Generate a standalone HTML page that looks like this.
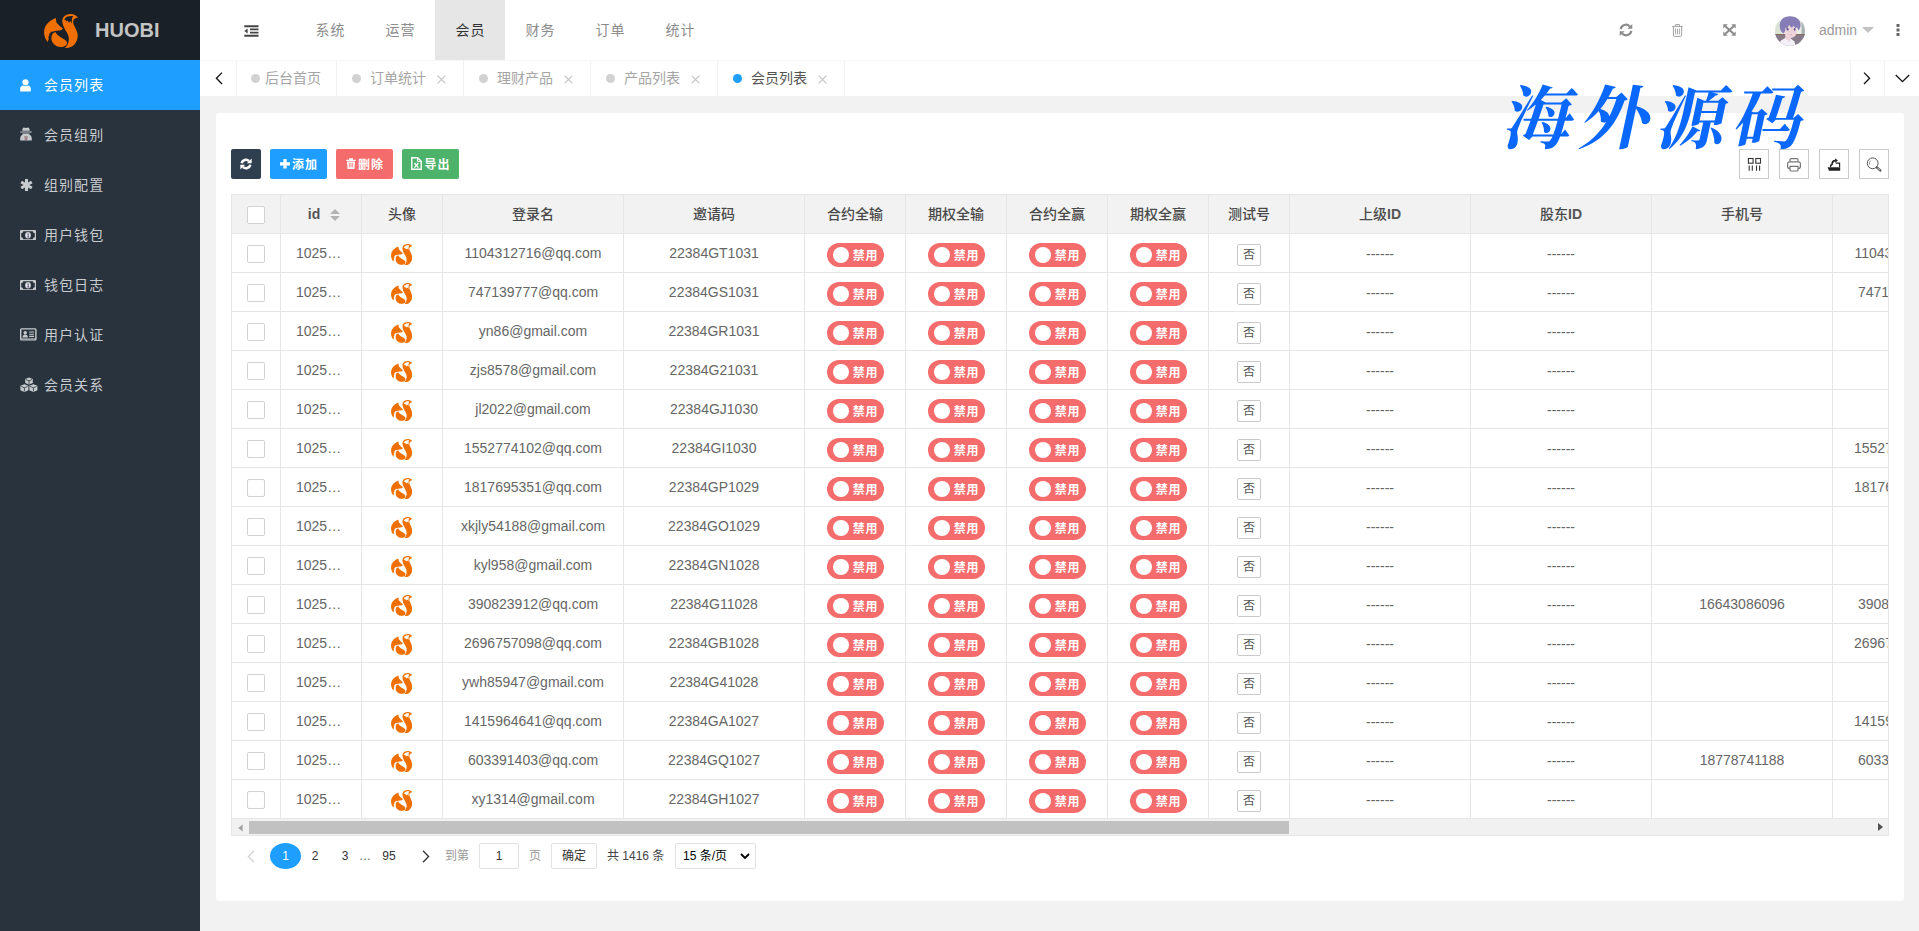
<!DOCTYPE html><html lang="zh-CN"><head><meta charset="utf-8"><title>HUOBI</title><style>
*{box-sizing:border-box;margin:0;padding:0}
html,body{width:1919px;height:931px;overflow:hidden;background:#f2f2f2;font-family:"Liberation Sans","Noto Sans CJK SC",sans-serif;font-size:14px;color:#666}
.abs{position:absolute}
#side{position:absolute;left:0;top:0;width:200px;height:931px;background:#28333e}
#logo{position:absolute;left:0;top:0;width:200px;height:60px;background:#192027}
#logo .t{position:absolute;left:95px;top:18.4px;font-size:20px;line-height:24px;font-weight:bold;color:#c4c4c4;letter-spacing:0}
#logo svg{position:absolute;left:44px;top:14px}
.mi{position:absolute;left:0;width:200px;height:50px;line-height:50px;color:#c8cbce;font-size:14px;padding-left:44px;letter-spacing:1.05px}
.mi.on{background:#1e9fff;color:#fff}
.mi svg{position:absolute}
#head{position:absolute;left:200px;top:0;width:1719px;height:60px;background:#fff}
.nav{position:absolute;top:0;height:60px;width:70px;line-height:60px;text-align:center;color:#8c8c8c;font-size:14px;letter-spacing:1px;padding-left:1px}
.nav.on{background:#e6e6e6;color:#333}
#tabs{position:absolute;left:200px;top:60px;width:1719px;height:36px;background:#fff;border-top:1px solid #f6f6f6}
.tab{position:absolute;top:0;height:35px;line-height:35px;border-right:1px solid #f2f2f2;color:#a5a5a5;font-size:14px;white-space:nowrap}
.tab .dot{position:absolute;top:13px;width:9px;height:9px;border-radius:50%;background:#d2d2d2}
.tab.on{color:#555}
.tab.on .dot{background:#1e9fff}
.tab .x{position:absolute;top:0;font-size:16px;color:#c2c2c2;font-family:"Liberation Sans",sans-serif}
#card{position:absolute;left:216px;top:113px;width:1688px;height:788px;background:#fff;border-radius:3px}
.btn{position:absolute;top:149px;height:30px;line-height:32px;border-radius:2px;color:#fff;font-size:12px;text-align:center;white-space:nowrap}
.tool{position:absolute;top:149px;width:30px;height:30px;border:1px solid #ccc;background:#fff}
#tbl{position:absolute;left:231px;top:194px;width:1658px;height:625px;overflow:hidden;border:1px solid #e6e6e6;border-bottom:none;background:#fff}
#tbl .hd{position:absolute;left:0;top:0;width:1700px;height:39px;background:#f2f2f2;border-bottom:1px solid #e6e6e6}
.c{position:absolute;top:0;height:100%;border-right:1px solid #e6e6e6;text-align:center;white-space:nowrap;overflow:hidden}
.hd .c{line-height:38.6px;font-weight:500;color:#4a4a4a;font-size:14px}
.hd .c b{font-weight:bold;color:#555}
.r{position:absolute;left:0;width:1700px;height:39px;border-bottom:1px solid #e6e6e6;line-height:38px;color:#666;font-size:14px}
.cb{position:absolute;left:15px;top:11px;width:18px;height:18px;border:1px solid #d2d2d2;border-radius:2px;background:#fff}
.sw{position:absolute;top:9px;width:57px;height:24px;border-radius:12px;background:#f56c6c;color:#fff;font-size:12px;line-height:27.5px;text-align:left;padding-left:25.8px;font-weight:bold;letter-spacing:.6px;overflow:hidden}
.sw i{position:absolute;left:6px;top:4px;width:16px;height:16px;border-radius:50%;background:#fff}
.no{position:absolute;left:28px;top:10px;width:24px;height:22px;border:1px solid #c9c9c9;border-radius:2px;font-size:12px;line-height:21.4px;color:#555;background:#fff}
.ds{position:relative;top:1px}
.fox{position:absolute;left:28.7px;top:9.8px}
#sb{position:absolute;left:231px;top:819px;width:1658px;height:17px;background:#f1f1f1;border:1px solid #e6e6e6;border-top:none}
#sb .th{position:absolute;left:17px;top:2.3px;width:1040px;height:12.3px;background:#c1c1c1}
.pg{position:absolute;top:843px;height:26px;line-height:26px;font-size:12px;color:#333;text-align:center;white-space:nowrap}
#wm{position:absolute;left:1506px;top:70px;width:320px;height:100px;font-family:"Liberation Serif","Noto Serif CJK SC",serif;font-weight:700;font-size:69px;line-height:100px;color:#0a68ff;white-space:nowrap;letter-spacing:7.6px;transform:skewX(-12deg);transform-origin:50% 50%}
</style></head><body>
<div id="side"><div id="logo"><svg class="lg" viewBox="0 0 34 34" width="34" height="34"><path fill="#ef7000" fill-rule="evenodd" d="M11.8 3.9 L12.4 8.4 L16 12.2 L18.9 14.6 L17.5 16.1 C15.4 16.8 13 16.6 10.8 17.1 C9.2 17.5 8 18.1 6.9 17.4 L6.2 19.6 L5 19.4 L5.4 21.4 L4.4 22.6 L4.7 25 L3.7 27.9 C1.9 26 0.6 23.2 0.2 20 C-0.2 16.4 0.6 13.4 2.2 11 C4.6 7.6 8 5.2 11.8 3.9 Z"/><path fill="#c85f08" d="M11 11.7 L12.7 12.5 L11.1 12.9 Z"/><path fill="#ef7000" d="M11.4 18 C9.4 18.6 8 20.2 7.5 22.6 C7 25.6 8 28.6 10.2 30.6 C12.4 32.6 15.6 33.4 18.4 33 C20.4 32.7 21.8 32 22.6 30.6 C23.2 29.4 23.1 28.4 22.6 27.6 C21.6 26 19.6 25 17.6 23.8 C15.2 22.4 12.8 20.8 11.4 18 Z"/><path fill="#ef7000" fill-rule="evenodd" d="M34 3.6 C31.8 1.2 29.6 -0.1 26.6 0 C23.4 0.1 20.6 1.2 19.2 3.4 C18.2 5 18 6.8 18.5 9 C19 11.2 20 13.8 21.4 16.2 C22.6 18 23.8 19.8 24.4 22 C25 24.4 25 26.8 24.2 29 C23.6 30.8 22.4 32.6 20.9 34 C23.4 34.2 25.8 33.6 27.9 32.4 C29.6 31.4 30.8 30 31.8 28.4 C32.8 26.8 33.4 25 33.6 23.2 C33.8 21.4 33.6 19.6 33 17.8 C32.4 16 31.4 14 30.4 12 C29.6 10.4 29 8.6 29.2 7.1 C29.5 5.2 31.4 4.2 34 3.6 Z M20.3 6 C21 4.2 22.2 3.1 23.6 2.6 C25 2.1 26.8 1.9 29.1 2.1 C28.3 3.2 28 4.4 27.9 5.6 C27.8 6.8 27.8 8 28 9.6 L26.3 7 L25 8.8 L23.7 6.6 L22.5 7.6 L21.6 5.9 Z"/></svg><div class="t">HUOBI</div></div>
<div class="mi on" style="top:60px"><svg style="left:20px;top:18.8px" width="11" height="13" viewBox="0 0 11 13"><circle cx="5.5" cy="3.3" r="3.1" fill="currentColor"/><path d="M0.2 12.6 V9.6 C0.2 7.6 1.4 6.6 3 6.4 C4.6 7.4 6.4 7.4 8 6.4 C9.6 6.6 10.8 7.6 10.8 9.6 V12.6 Z" fill="currentColor"/></svg>会员列表</div>
<div class="mi" style="top:110px"><svg style="left:20px;top:17px" width="12" height="14" viewBox="0 0 12 14"><path d="M2.2 3.8 C2.4 1.6 3 0.4 4 0.4 C4.8 0.4 5.2 0.9 6 0.9 C6.8 0.9 7.2 0.4 8 0.4 C9 0.4 9.6 1.6 9.8 3.8 Z M0.2 4.5 H11.8 V5.6 H0.2 Z M2.6 6.4 H9.4 V7.2 L10.2 8.2 C11.4 8.8 11.8 10 11.8 13.6 H0.2 C0.2 10 0.6 8.8 1.8 8.2 L2.6 7.2 Z" fill="currentColor"/><path d="M5 9 L5.4 13.2 M7 9 L6.6 13.2" stroke="#7a3a40" stroke-width="0.7"/></svg>会员组别</div>
<div class="mi" style="top:160px"><svg style="left:20px;top:19px" width="13" height="12" viewBox="0 0 13 12"><g stroke="currentColor" stroke-width="3.1" stroke-linecap="butt"><path d="M6.5 0 V12 M1.2 3 L11.8 9 M1.2 9 L11.8 3"/></g></svg>组别配置</div>
<div class="mi" style="top:210px"><svg style="left:19.5px;top:20px" width="16" height="10.4" viewBox="0 0 16 10.4"><rect x="0" y="0" width="16" height="10.4" rx="0.5" fill="currentColor"/><path d="M3.2 1.2 H12.8 A2 2 0 0 0 14.8 3.2 V7.2 A2 2 0 0 0 12.8 9.2 H3.2 A2 2 0 0 0 1.2 7.2 V3.2 A2 2 0 0 0 3.2 1.2 Z" fill="#28333e"/><ellipse cx="8" cy="5.2" rx="2.9" ry="3.2" fill="currentColor"/><ellipse cx="8" cy="5.2" rx="1.9" ry="2.3" fill="#eceff2"/><path d="M7.3 4.2 L8.2 3.6 V6.8 M7.2 6.9 H9.1" stroke="#4a3a6a" stroke-width="0.8" fill="none"/></svg>用户钱包</div>
<div class="mi" style="top:260px"><svg style="left:19.5px;top:20px" width="16" height="10.4" viewBox="0 0 16 10.4"><rect x="0" y="0" width="16" height="10.4" rx="0.5" fill="currentColor"/><path d="M3.2 1.2 H12.8 A2 2 0 0 0 14.8 3.2 V7.2 A2 2 0 0 0 12.8 9.2 H3.2 A2 2 0 0 0 1.2 7.2 V3.2 A2 2 0 0 0 3.2 1.2 Z" fill="#28333e"/><ellipse cx="8" cy="5.2" rx="2.9" ry="3.2" fill="currentColor"/><ellipse cx="8" cy="5.2" rx="1.9" ry="2.3" fill="#eceff2"/><path d="M7.3 4.2 L8.2 3.6 V6.8 M7.2 6.9 H9.1" stroke="#4a3a6a" stroke-width="0.8" fill="none"/></svg>钱包日志</div>
<div class="mi" style="top:310px"><svg style="left:20px;top:18px" width="17" height="13" viewBox="0 0 17 13"><rect x="0.7" y="0.9" width="15.2" height="11" rx="0.8" fill="none" stroke="currentColor" stroke-width="1.4"/><path d="M0.7 10.4 H15.9" stroke="currentColor" stroke-width="0.6"/><circle cx="5.2" cy="4.8" r="1.7" fill="currentColor"/><path d="M2.6 9.6 C2.6 7.4 3.6 6.6 5.2 6.6 C6.8 6.6 7.8 7.4 7.8 9.6 Z" fill="currentColor"/><path d="M9.2 4 H14 M9.2 6.2 H14 M9.2 8.4 H14" stroke="currentColor" stroke-width="1.1"/></svg>用户认证</div>
<div class="mi" style="top:360px"><svg style="left:20px;top:17px" width="18" height="16" viewBox="0 0 18 16"><g fill="currentColor"><path d="M9 0.4 L12.8 1.9 V6 L9 7.6 L5.2 6 V1.9 Z"/><path d="M4.4 7.2 L8.4 8.8 V13.2 L4.4 15 L0.4 13.2 V8.8 Z"/><path d="M13.4 7.2 L17.4 8.8 V13.2 L13.4 15 L9.4 13.2 V8.8 Z"/></g><g fill="none" stroke="#28333e" stroke-width="0.8"><path d="M5.9 2.5 L9 3.8 L12.1 2.5 M9 3.8 V7"/><path d="M1.2 9.4 L4.4 10.8 L7.6 9.4 M4.4 10.8 V14.4"/><path d="M10.2 9.4 L13.4 10.8 L16.6 9.4 M13.4 10.8 V14.4"/></g></svg>会员关系</div>
</div>
<div id="head">
<svg class="abs" style="left:43.6px;top:24.8px" width="15" height="12" viewBox="0 0 15 12"><path d="M0.3 1.2 H14.5 M6 4.4 H14.5 M6 7.6 H14.5 M0.3 10.8 H14.5" stroke="#444" stroke-width="1.9"/><path d="M3.6 3.6 V8.4 L0.4 6 Z" fill="#444"/></svg>
<div class="nav" style="left:95px">系统</div>
<div class="nav" style="left:165px">运营</div>
<div class="nav on" style="left:235px">会员</div>
<div class="nav" style="left:305px">财务</div>
<div class="nav" style="left:375px">订单</div>
<div class="nav" style="left:445px">统计</div>
<svg class="abs" style="left:1419px;top:23px" width="14" height="14" viewBox="0 0 14 14"><g fill="none" stroke="#8a8a8a" stroke-width="2.2"><path d="M1.7 6.2 A5.3 5.3 0 0 1 10.8 3.4"/><path d="M12.3 7.8 A5.3 5.3 0 0 1 3.2 10.6"/></g><path d="M13.3 0.9 V5.8 H8.4 Z M0.7 13.1 V8.2 H5.6 Z" fill="#8a8a8a"/></svg>
<svg class="abs" style="left:1472px;top:24px" width="11" height="13" viewBox="0 0 11 13"><g fill="none" stroke="#a0a0a0" stroke-width="1"><path d="M0.2 2.4 H10.8 M3.6 2.2 V0.6 H7.4 V2.2"/><path d="M1.4 2.6 V11.2 Q1.4 12.4 2.6 12.4 H8.4 Q9.6 12.4 9.6 11.2 V2.6"/><path d="M3.6 4.6 V10.4 M5.5 4.6 V10.4 M7.4 4.6 V10.4" stroke-width="0.9"/></g></svg>
<svg class="abs" style="left:1522.5px;top:24px" width="13" height="12" viewBox="0 0 13 12"><path d="M2.4 2.2 L10.6 9.8 M10.6 2.2 L2.4 9.8" stroke="#8a8a8a" stroke-width="2"/><path d="M0.3 0.3 H4.8 L0.3 4.6 Z M12.7 0.3 V4.6 L8.2 0.3 Z M0.3 11.7 V7.4 L4.8 11.7 Z M12.7 11.7 H8.2 L12.7 7.4 Z" fill="#8a8a8a"/></svg>
<div class="abs" style="left:1575px;top:16px;width:30px;height:30px;border-radius:50%;overflow:hidden"><svg style="display:block" width="30" height="30" viewBox="0 0 30 30"><g><rect width="30" height="30" fill="#e9eee8"/><rect x="0" y="6" width="6" height="12" fill="#d9e4d6"/><rect x="26.5" y="4" width="3.5" height="18" fill="#a9b5b3"/><rect x="0" y="18.2" width="30" height="12" fill="#877b8b"/><rect x="0" y="18.2" width="30" height="0.8" fill="#8a5f4a"/><path d="M2 30 L6 24.5 L11 21.5 L15 22 L19.5 25.5 L20.5 30 Z" fill="#f3f1f6"/><path d="M10.5 18 L15.5 22 L14.8 26 L10 22.5 Z" fill="#ecd3da"/><ellipse cx="15.6" cy="15.4" rx="6.4" ry="6.6" fill="#edd3da"/><path d="M4.8 11 C4 4 9 0.2 15 0.2 C21 0.2 26 3.6 25.6 9.4 C25.4 11.6 24.4 13.2 23.4 14.4 L22 11 L20.6 12.6 L18.4 9.6 L17 12 L14 9 L12 13 L10.6 11.6 L10 15 L8.6 17.6 C6.4 16.4 5.2 14 4.8 11 Z" fill="#867cb6"/><ellipse cx="12.6" cy="13.2" rx="1" ry="1.3" fill="#5b5c93"/><ellipse cx="19.6" cy="13.4" rx="0.9" ry="1.3" fill="#5b5c93"/><ellipse cx="16" cy="18.6" rx="0.6" ry="0.5" fill="#c98a98"/></g></svg></div>
<div class="abs" style="left:1619px;top:0;line-height:60px;font-size:14px;color:#999">admin</div>
<div class="abs" style="left:1662px;top:27px;width:0;height:0;border:6px solid transparent;border-top-color:#c2c2c2;border-bottom:none"></div>
<svg class="abs" style="left:1696px;top:23px" width="4" height="14" viewBox="0 0 4 14"><rect x="0.5" y="1" width="3" height="3" fill="#666"/><rect x="0.5" y="5.5" width="3" height="3" fill="#666"/><rect x="0.5" y="10" width="3" height="3" fill="#666"/></svg>
</div>
<div id="tabs">
<div class="tab" style="left:0;width:37px"><svg class="abs" style="left:15px;top:11px" width="8" height="13" viewBox="0 0 8 13"><path d="M7 0.6 L1.4 6.3 L7 12" fill="none" stroke="#111" stroke-width="1.3"/></svg></div>
<div class="tab" style="left:37px;width:100px"><i class="dot" style="left:14px"></i><span class="abs" style="left:28px">后台首页</span></div>
<div class="tab" style="left:137px;width:127px"><i class="dot" style="left:15px"></i><span class="abs" style="left:33px">订单统计</span><svg class="abs" style="left:100px;top:14px" width="9" height="9" viewBox="0 0 9 9"><path d="M0.6 0.6 L8.4 8.4 M8.4 0.6 L0.6 8.4" stroke="#c2c2c2" stroke-width="1.1"/></svg></div>
<div class="tab" style="left:264px;width:127px"><i class="dot" style="left:15px"></i><span class="abs" style="left:33px">理财产品</span><svg class="abs" style="left:100px;top:14px" width="9" height="9" viewBox="0 0 9 9"><path d="M0.6 0.6 L8.4 8.4 M8.4 0.6 L0.6 8.4" stroke="#c2c2c2" stroke-width="1.1"/></svg></div>
<div class="tab" style="left:391px;width:127px"><i class="dot" style="left:15px"></i><span class="abs" style="left:33px">产品列表</span><svg class="abs" style="left:100px;top:14px" width="9" height="9" viewBox="0 0 9 9"><path d="M0.6 0.6 L8.4 8.4 M8.4 0.6 L0.6 8.4" stroke="#c2c2c2" stroke-width="1.1"/></svg></div>
<div class="tab on" style="left:518px;width:127px"><i class="dot" style="left:15px"></i><span class="abs" style="left:33px">会员列表</span><svg class="abs" style="left:100px;top:14px" width="9" height="9" viewBox="0 0 9 9"><path d="M0.6 0.6 L8.4 8.4 M8.4 0.6 L0.6 8.4" stroke="#c2c2c2" stroke-width="1.1"/></svg></div>
<div class="tab" style="left:1650px;width:35px;border-left:1px solid #f2f2f2"><svg class="abs" style="left:12px;top:11px" width="8" height="13" viewBox="0 0 8 13"><path d="M1 0.6 L6.6 6.3 L1 12" fill="none" stroke="#111" stroke-width="1.3"/></svg></div>
<div class="tab" style="left:1685px;width:34px;border-right:none"><svg class="abs" style="left:10px;top:13px" width="15" height="9" viewBox="0 0 15 9"><path d="M0.8 1 L7.5 7.6 L14.2 1" fill="none" stroke="#111" stroke-width="1.3"/></svg></div>
</div>
<div id="card"></div>
<div class="btn" style="left:231px;width:30px;background:#2f3f50"><svg class="abs" style="left:9px;top:8.5px" width="12" height="12" viewBox="0 0 14 14"><g fill="none" stroke="#fff" stroke-width="3"><path d="M2 6.2 A5.1 5.1 0 0 1 10.6 3.6"/><path d="M12 7.8 A5.1 5.1 0 0 1 3.4 10.4"/></g><path d="M13.6 0.6 V6.2 H8 Z M0.4 13.4 V7.8 H6 Z" fill="#fff"/></svg></div>
<div class="btn" style="left:270px;width:57px;background:#1e9fff;font-weight:bold;padding-left:13px;letter-spacing:1.1px"><svg class="abs" style="left:10px;top:9.6px" width="10" height="10" viewBox="0 0 10 10"><path d="M5 0 V9.6 M0 4.8 H10" stroke="#fff" stroke-width="3.3"/></svg>添加</div>
<div class="btn" style="left:336px;width:57px;background:#f56c6c;font-weight:bold;padding-left:13px;letter-spacing:1.1px"><svg class="abs" style="left:9.5px;top:8.5px" width="10" height="11" viewBox="0 0 10 11"><path d="M0.2 1.7 H9.8 V3.1 H0.2 Z M3 0.2 H7 V1.7 H3 Z M1 3.6 H9 L8.5 10.4 Q8.4 10.9 7.9 10.9 H2.1 Q1.6 10.9 1.5 10.4 Z" fill="#fff"/><path d="M3.3 4.8 V9.4 M5 4.8 V9.4 M6.7 4.8 V9.4" stroke="#f56c6c" stroke-width="0.8"/></svg>删除</div>
<div class="btn" style="left:402px;width:57px;background:#4db36a;font-weight:bold;padding-left:14px;letter-spacing:1.1px"><svg class="abs" style="left:9px;top:8px" width="11" height="13" viewBox="0 0 11 13"><path d="M0.8 0.8 H6.6 L10.2 4.4 V12.2 H0.8 Z" fill="none" stroke="#fff" stroke-width="1.4"/><path d="M6.4 0.8 V4.6 H10.2" fill="none" stroke="#fff" stroke-width="1"/><path d="M3.4 6 L7.4 10.6 M7.4 6 L3.4 10.6" stroke="#fff" stroke-width="1.4"/></svg>导出</div>
<div class="tool" style="left:1739px"><svg class="abs" style="left:-1px;top:-1px" width="30" height="30" viewBox="0 0 30 30"><g fill="none" stroke="#333" stroke-width="1.1"><rect x="9.4" y="9.5" width="4.7" height="4.7"/><rect x="16.8" y="9.5" width="4.7" height="4.7"/><path d="M10.2 16.6 V21.8 M13.3 16.6 V21.8 M17.5 16.6 V21.8 M20.6 16.6 V21.8"/></g></svg></div>
<div class="tool" style="left:1779px"><svg class="abs" style="left:-1px;top:-1px" width="30" height="30" viewBox="0 0 30 30"><g fill="none" stroke="#777" stroke-width="1.2"><path d="M11 12.8 V10.6 Q11 9.6 12 9.6 H18 Q19 9.6 19 10.6 V12.8"/><rect x="8.6" y="12.8" width="12.8" height="6.6" rx="2"/><path d="M11 17.4 H19 V21 Q19 22 18 22 H12 Q11 22 11 21 Z" fill="#fff"/></g></svg></div>
<div class="tool" style="left:1819px"><svg class="abs" style="left:-1px;top:-1px" width="30" height="30" viewBox="0 0 30 30"><path d="M8.6 18.2 H21.2 V21.8 H10 Z" fill="#222"/><path d="M11.6 18 V16.2 H13 M16.8 14.2 H20.6 V18" fill="none" stroke="#222" stroke-width="1.2"/><path d="M13 16 C13 13 14.2 11.6 16.4 11.6" fill="none" stroke="#222" stroke-width="1.7"/><path d="M16.2 9.2 L18.9 11.5 L16.2 13.8 Z" fill="#222"/></svg></div>
<div class="tool" style="left:1859px"><svg class="abs" style="left:-1px;top:-1px" width="30" height="30" viewBox="0 0 30 30"><circle cx="13.7" cy="14.3" r="5.4" fill="none" stroke="#555" stroke-width="1"/><path d="M10.6 15.6 A3.4 3.4 0 0 1 11.6 11.6" fill="none" stroke="#777" stroke-width="0.8"/><path d="M17.8 18.4 L21.4 21.6" stroke="#555" stroke-width="2.2" stroke-linecap="round"/><path d="M18.4 19 L21 21.2" stroke="#fff" stroke-width="0.7"/></svg></div>
<div id="tbl"><div class="hd">
<div class="c" style="left:0px;width:49px"><i class="cb" style="top:11px"></i></div>
<div class="c" style="left:49px;width:81px"><b style="padding-right:14px">id</b><svg class="abs" style="left:49px;top:14px" width="10" height="12" viewBox="0 0 10 12"><path d="M0 5 L5 0 L10 5 Z" fill="#b2b2b2"/><path d="M0 7 L5 12 L10 7 Z" fill="#b2b2b2"/></svg></div>
<div class="c" style="left:130px;width:81px">头像</div>
<div class="c" style="left:211px;width:181px">登录名</div>
<div class="c" style="left:392px;width:181px">邀请码</div>
<div class="c" style="left:573px;width:101px">合约全输</div>
<div class="c" style="left:674px;width:101px">期权全输</div>
<div class="c" style="left:775px;width:101px">合约全赢</div>
<div class="c" style="left:876px;width:101px">期权全赢</div>
<div class="c" style="left:977px;width:81px">测试号</div>
<div class="c" style="left:1058px;width:181px">上级<b>ID</b></div>
<div class="c" style="left:1239px;width:181px">股东<b>ID</b></div>
<div class="c" style="left:1420px;width:181px">手机号</div>
<div class="c" style="left:1601px;width:181px"></div>
</div>
<div class="r" style="top:39px">
<div class="c" style="left:0px;width:49px"><i class="cb"></i></div>
<div class="c" style="left:49px;width:81px;text-align:left;padding-left:15px">1025…</div>
<div class="c" style="left:130px;width:81px"><svg class="fox" viewBox="0 0 34 34" width="21.4" height="21.4"><path fill="#ef7000" fill-rule="evenodd" d="M11.8 3.9 L12.4 8.4 L16 12.2 L18.9 14.6 L17.5 16.1 C15.4 16.8 13 16.6 10.8 17.1 C9.2 17.5 8 18.1 6.9 17.4 L6.2 19.6 L5 19.4 L5.4 21.4 L4.4 22.6 L4.7 25 L3.7 27.9 C1.9 26 0.6 23.2 0.2 20 C-0.2 16.4 0.6 13.4 2.2 11 C4.6 7.6 8 5.2 11.8 3.9 Z"/><path fill="#c85f08" d="M11 11.7 L12.7 12.5 L11.1 12.9 Z"/><path fill="#ef7000" d="M11.4 18 C9.4 18.6 8 20.2 7.5 22.6 C7 25.6 8 28.6 10.2 30.6 C12.4 32.6 15.6 33.4 18.4 33 C20.4 32.7 21.8 32 22.6 30.6 C23.2 29.4 23.1 28.4 22.6 27.6 C21.6 26 19.6 25 17.6 23.8 C15.2 22.4 12.8 20.8 11.4 18 Z"/><path fill="#ef7000" fill-rule="evenodd" d="M34 3.6 C31.8 1.2 29.6 -0.1 26.6 0 C23.4 0.1 20.6 1.2 19.2 3.4 C18.2 5 18 6.8 18.5 9 C19 11.2 20 13.8 21.4 16.2 C22.6 18 23.8 19.8 24.4 22 C25 24.4 25 26.8 24.2 29 C23.6 30.8 22.4 32.6 20.9 34 C23.4 34.2 25.8 33.6 27.9 32.4 C29.6 31.4 30.8 30 31.8 28.4 C32.8 26.8 33.4 25 33.6 23.2 C33.8 21.4 33.6 19.6 33 17.8 C32.4 16 31.4 14 30.4 12 C29.6 10.4 29 8.6 29.2 7.1 C29.5 5.2 31.4 4.2 34 3.6 Z M20.3 6 C21 4.2 22.2 3.1 23.6 2.6 C25 2.1 26.8 1.9 29.1 2.1 C28.3 3.2 28 4.4 27.9 5.6 C27.8 6.8 27.8 8 28 9.6 L26.3 7 L25 8.8 L23.7 6.6 L22.5 7.6 L21.6 5.9 Z"/></svg></div>
<div class="c" style="left:211px;width:181px">1104312716@qq.com</div>
<div class="c" style="left:392px;width:181px">22384GT1031</div>
<div class="c" style="left:573px;width:101px"><span class="sw" style="left:22px"><i></i>禁用</span></div>
<div class="c" style="left:674px;width:101px"><span class="sw" style="left:22px"><i></i>禁用</span></div>
<div class="c" style="left:775px;width:101px"><span class="sw" style="left:22px"><i></i>禁用</span></div>
<div class="c" style="left:876px;width:101px"><span class="sw" style="left:22px"><i></i>禁用</span></div>
<div class="c" style="left:977px;width:81px"><span class="no">否</span></div>
<div class="c" style="left:1058px;width:181px"><span class="ds">------</span></div>
<div class="c" style="left:1239px;width:181px"><span class="ds">------</span></div>
<div class="c" style="left:1420px;width:181px"></div>
<div class="c" style="left:1601px;width:181px">1104312716@qq.com</div>
</div>
<div class="r" style="top:78px">
<div class="c" style="left:0px;width:49px"><i class="cb"></i></div>
<div class="c" style="left:49px;width:81px;text-align:left;padding-left:15px">1025…</div>
<div class="c" style="left:130px;width:81px"><svg class="fox" viewBox="0 0 34 34" width="21.4" height="21.4"><path fill="#ef7000" fill-rule="evenodd" d="M11.8 3.9 L12.4 8.4 L16 12.2 L18.9 14.6 L17.5 16.1 C15.4 16.8 13 16.6 10.8 17.1 C9.2 17.5 8 18.1 6.9 17.4 L6.2 19.6 L5 19.4 L5.4 21.4 L4.4 22.6 L4.7 25 L3.7 27.9 C1.9 26 0.6 23.2 0.2 20 C-0.2 16.4 0.6 13.4 2.2 11 C4.6 7.6 8 5.2 11.8 3.9 Z"/><path fill="#c85f08" d="M11 11.7 L12.7 12.5 L11.1 12.9 Z"/><path fill="#ef7000" d="M11.4 18 C9.4 18.6 8 20.2 7.5 22.6 C7 25.6 8 28.6 10.2 30.6 C12.4 32.6 15.6 33.4 18.4 33 C20.4 32.7 21.8 32 22.6 30.6 C23.2 29.4 23.1 28.4 22.6 27.6 C21.6 26 19.6 25 17.6 23.8 C15.2 22.4 12.8 20.8 11.4 18 Z"/><path fill="#ef7000" fill-rule="evenodd" d="M34 3.6 C31.8 1.2 29.6 -0.1 26.6 0 C23.4 0.1 20.6 1.2 19.2 3.4 C18.2 5 18 6.8 18.5 9 C19 11.2 20 13.8 21.4 16.2 C22.6 18 23.8 19.8 24.4 22 C25 24.4 25 26.8 24.2 29 C23.6 30.8 22.4 32.6 20.9 34 C23.4 34.2 25.8 33.6 27.9 32.4 C29.6 31.4 30.8 30 31.8 28.4 C32.8 26.8 33.4 25 33.6 23.2 C33.8 21.4 33.6 19.6 33 17.8 C32.4 16 31.4 14 30.4 12 C29.6 10.4 29 8.6 29.2 7.1 C29.5 5.2 31.4 4.2 34 3.6 Z M20.3 6 C21 4.2 22.2 3.1 23.6 2.6 C25 2.1 26.8 1.9 29.1 2.1 C28.3 3.2 28 4.4 27.9 5.6 C27.8 6.8 27.8 8 28 9.6 L26.3 7 L25 8.8 L23.7 6.6 L22.5 7.6 L21.6 5.9 Z"/></svg></div>
<div class="c" style="left:211px;width:181px">747139777@qq.com</div>
<div class="c" style="left:392px;width:181px">22384GS1031</div>
<div class="c" style="left:573px;width:101px"><span class="sw" style="left:22px"><i></i>禁用</span></div>
<div class="c" style="left:674px;width:101px"><span class="sw" style="left:22px"><i></i>禁用</span></div>
<div class="c" style="left:775px;width:101px"><span class="sw" style="left:22px"><i></i>禁用</span></div>
<div class="c" style="left:876px;width:101px"><span class="sw" style="left:22px"><i></i>禁用</span></div>
<div class="c" style="left:977px;width:81px"><span class="no">否</span></div>
<div class="c" style="left:1058px;width:181px"><span class="ds">------</span></div>
<div class="c" style="left:1239px;width:181px"><span class="ds">------</span></div>
<div class="c" style="left:1420px;width:181px"></div>
<div class="c" style="left:1601px;width:181px">747139777@qq.com</div>
</div>
<div class="r" style="top:117px">
<div class="c" style="left:0px;width:49px"><i class="cb"></i></div>
<div class="c" style="left:49px;width:81px;text-align:left;padding-left:15px">1025…</div>
<div class="c" style="left:130px;width:81px"><svg class="fox" viewBox="0 0 34 34" width="21.4" height="21.4"><path fill="#ef7000" fill-rule="evenodd" d="M11.8 3.9 L12.4 8.4 L16 12.2 L18.9 14.6 L17.5 16.1 C15.4 16.8 13 16.6 10.8 17.1 C9.2 17.5 8 18.1 6.9 17.4 L6.2 19.6 L5 19.4 L5.4 21.4 L4.4 22.6 L4.7 25 L3.7 27.9 C1.9 26 0.6 23.2 0.2 20 C-0.2 16.4 0.6 13.4 2.2 11 C4.6 7.6 8 5.2 11.8 3.9 Z"/><path fill="#c85f08" d="M11 11.7 L12.7 12.5 L11.1 12.9 Z"/><path fill="#ef7000" d="M11.4 18 C9.4 18.6 8 20.2 7.5 22.6 C7 25.6 8 28.6 10.2 30.6 C12.4 32.6 15.6 33.4 18.4 33 C20.4 32.7 21.8 32 22.6 30.6 C23.2 29.4 23.1 28.4 22.6 27.6 C21.6 26 19.6 25 17.6 23.8 C15.2 22.4 12.8 20.8 11.4 18 Z"/><path fill="#ef7000" fill-rule="evenodd" d="M34 3.6 C31.8 1.2 29.6 -0.1 26.6 0 C23.4 0.1 20.6 1.2 19.2 3.4 C18.2 5 18 6.8 18.5 9 C19 11.2 20 13.8 21.4 16.2 C22.6 18 23.8 19.8 24.4 22 C25 24.4 25 26.8 24.2 29 C23.6 30.8 22.4 32.6 20.9 34 C23.4 34.2 25.8 33.6 27.9 32.4 C29.6 31.4 30.8 30 31.8 28.4 C32.8 26.8 33.4 25 33.6 23.2 C33.8 21.4 33.6 19.6 33 17.8 C32.4 16 31.4 14 30.4 12 C29.6 10.4 29 8.6 29.2 7.1 C29.5 5.2 31.4 4.2 34 3.6 Z M20.3 6 C21 4.2 22.2 3.1 23.6 2.6 C25 2.1 26.8 1.9 29.1 2.1 C28.3 3.2 28 4.4 27.9 5.6 C27.8 6.8 27.8 8 28 9.6 L26.3 7 L25 8.8 L23.7 6.6 L22.5 7.6 L21.6 5.9 Z"/></svg></div>
<div class="c" style="left:211px;width:181px">yn86@gmail.com</div>
<div class="c" style="left:392px;width:181px">22384GR1031</div>
<div class="c" style="left:573px;width:101px"><span class="sw" style="left:22px"><i></i>禁用</span></div>
<div class="c" style="left:674px;width:101px"><span class="sw" style="left:22px"><i></i>禁用</span></div>
<div class="c" style="left:775px;width:101px"><span class="sw" style="left:22px"><i></i>禁用</span></div>
<div class="c" style="left:876px;width:101px"><span class="sw" style="left:22px"><i></i>禁用</span></div>
<div class="c" style="left:977px;width:81px"><span class="no">否</span></div>
<div class="c" style="left:1058px;width:181px"><span class="ds">------</span></div>
<div class="c" style="left:1239px;width:181px"><span class="ds">------</span></div>
<div class="c" style="left:1420px;width:181px"></div>
<div class="c" style="left:1601px;width:181px"></div>
</div>
<div class="r" style="top:156px">
<div class="c" style="left:0px;width:49px"><i class="cb"></i></div>
<div class="c" style="left:49px;width:81px;text-align:left;padding-left:15px">1025…</div>
<div class="c" style="left:130px;width:81px"><svg class="fox" viewBox="0 0 34 34" width="21.4" height="21.4"><path fill="#ef7000" fill-rule="evenodd" d="M11.8 3.9 L12.4 8.4 L16 12.2 L18.9 14.6 L17.5 16.1 C15.4 16.8 13 16.6 10.8 17.1 C9.2 17.5 8 18.1 6.9 17.4 L6.2 19.6 L5 19.4 L5.4 21.4 L4.4 22.6 L4.7 25 L3.7 27.9 C1.9 26 0.6 23.2 0.2 20 C-0.2 16.4 0.6 13.4 2.2 11 C4.6 7.6 8 5.2 11.8 3.9 Z"/><path fill="#c85f08" d="M11 11.7 L12.7 12.5 L11.1 12.9 Z"/><path fill="#ef7000" d="M11.4 18 C9.4 18.6 8 20.2 7.5 22.6 C7 25.6 8 28.6 10.2 30.6 C12.4 32.6 15.6 33.4 18.4 33 C20.4 32.7 21.8 32 22.6 30.6 C23.2 29.4 23.1 28.4 22.6 27.6 C21.6 26 19.6 25 17.6 23.8 C15.2 22.4 12.8 20.8 11.4 18 Z"/><path fill="#ef7000" fill-rule="evenodd" d="M34 3.6 C31.8 1.2 29.6 -0.1 26.6 0 C23.4 0.1 20.6 1.2 19.2 3.4 C18.2 5 18 6.8 18.5 9 C19 11.2 20 13.8 21.4 16.2 C22.6 18 23.8 19.8 24.4 22 C25 24.4 25 26.8 24.2 29 C23.6 30.8 22.4 32.6 20.9 34 C23.4 34.2 25.8 33.6 27.9 32.4 C29.6 31.4 30.8 30 31.8 28.4 C32.8 26.8 33.4 25 33.6 23.2 C33.8 21.4 33.6 19.6 33 17.8 C32.4 16 31.4 14 30.4 12 C29.6 10.4 29 8.6 29.2 7.1 C29.5 5.2 31.4 4.2 34 3.6 Z M20.3 6 C21 4.2 22.2 3.1 23.6 2.6 C25 2.1 26.8 1.9 29.1 2.1 C28.3 3.2 28 4.4 27.9 5.6 C27.8 6.8 27.8 8 28 9.6 L26.3 7 L25 8.8 L23.7 6.6 L22.5 7.6 L21.6 5.9 Z"/></svg></div>
<div class="c" style="left:211px;width:181px">zjs8578@gmail.com</div>
<div class="c" style="left:392px;width:181px">22384G21031</div>
<div class="c" style="left:573px;width:101px"><span class="sw" style="left:22px"><i></i>禁用</span></div>
<div class="c" style="left:674px;width:101px"><span class="sw" style="left:22px"><i></i>禁用</span></div>
<div class="c" style="left:775px;width:101px"><span class="sw" style="left:22px"><i></i>禁用</span></div>
<div class="c" style="left:876px;width:101px"><span class="sw" style="left:22px"><i></i>禁用</span></div>
<div class="c" style="left:977px;width:81px"><span class="no">否</span></div>
<div class="c" style="left:1058px;width:181px"><span class="ds">------</span></div>
<div class="c" style="left:1239px;width:181px"><span class="ds">------</span></div>
<div class="c" style="left:1420px;width:181px"></div>
<div class="c" style="left:1601px;width:181px"></div>
</div>
<div class="r" style="top:195px">
<div class="c" style="left:0px;width:49px"><i class="cb"></i></div>
<div class="c" style="left:49px;width:81px;text-align:left;padding-left:15px">1025…</div>
<div class="c" style="left:130px;width:81px"><svg class="fox" viewBox="0 0 34 34" width="21.4" height="21.4"><path fill="#ef7000" fill-rule="evenodd" d="M11.8 3.9 L12.4 8.4 L16 12.2 L18.9 14.6 L17.5 16.1 C15.4 16.8 13 16.6 10.8 17.1 C9.2 17.5 8 18.1 6.9 17.4 L6.2 19.6 L5 19.4 L5.4 21.4 L4.4 22.6 L4.7 25 L3.7 27.9 C1.9 26 0.6 23.2 0.2 20 C-0.2 16.4 0.6 13.4 2.2 11 C4.6 7.6 8 5.2 11.8 3.9 Z"/><path fill="#c85f08" d="M11 11.7 L12.7 12.5 L11.1 12.9 Z"/><path fill="#ef7000" d="M11.4 18 C9.4 18.6 8 20.2 7.5 22.6 C7 25.6 8 28.6 10.2 30.6 C12.4 32.6 15.6 33.4 18.4 33 C20.4 32.7 21.8 32 22.6 30.6 C23.2 29.4 23.1 28.4 22.6 27.6 C21.6 26 19.6 25 17.6 23.8 C15.2 22.4 12.8 20.8 11.4 18 Z"/><path fill="#ef7000" fill-rule="evenodd" d="M34 3.6 C31.8 1.2 29.6 -0.1 26.6 0 C23.4 0.1 20.6 1.2 19.2 3.4 C18.2 5 18 6.8 18.5 9 C19 11.2 20 13.8 21.4 16.2 C22.6 18 23.8 19.8 24.4 22 C25 24.4 25 26.8 24.2 29 C23.6 30.8 22.4 32.6 20.9 34 C23.4 34.2 25.8 33.6 27.9 32.4 C29.6 31.4 30.8 30 31.8 28.4 C32.8 26.8 33.4 25 33.6 23.2 C33.8 21.4 33.6 19.6 33 17.8 C32.4 16 31.4 14 30.4 12 C29.6 10.4 29 8.6 29.2 7.1 C29.5 5.2 31.4 4.2 34 3.6 Z M20.3 6 C21 4.2 22.2 3.1 23.6 2.6 C25 2.1 26.8 1.9 29.1 2.1 C28.3 3.2 28 4.4 27.9 5.6 C27.8 6.8 27.8 8 28 9.6 L26.3 7 L25 8.8 L23.7 6.6 L22.5 7.6 L21.6 5.9 Z"/></svg></div>
<div class="c" style="left:211px;width:181px">jl2022@gmail.com</div>
<div class="c" style="left:392px;width:181px">22384GJ1030</div>
<div class="c" style="left:573px;width:101px"><span class="sw" style="left:22px"><i></i>禁用</span></div>
<div class="c" style="left:674px;width:101px"><span class="sw" style="left:22px"><i></i>禁用</span></div>
<div class="c" style="left:775px;width:101px"><span class="sw" style="left:22px"><i></i>禁用</span></div>
<div class="c" style="left:876px;width:101px"><span class="sw" style="left:22px"><i></i>禁用</span></div>
<div class="c" style="left:977px;width:81px"><span class="no">否</span></div>
<div class="c" style="left:1058px;width:181px"><span class="ds">------</span></div>
<div class="c" style="left:1239px;width:181px"><span class="ds">------</span></div>
<div class="c" style="left:1420px;width:181px"></div>
<div class="c" style="left:1601px;width:181px"></div>
</div>
<div class="r" style="top:234px">
<div class="c" style="left:0px;width:49px"><i class="cb"></i></div>
<div class="c" style="left:49px;width:81px;text-align:left;padding-left:15px">1025…</div>
<div class="c" style="left:130px;width:81px"><svg class="fox" viewBox="0 0 34 34" width="21.4" height="21.4"><path fill="#ef7000" fill-rule="evenodd" d="M11.8 3.9 L12.4 8.4 L16 12.2 L18.9 14.6 L17.5 16.1 C15.4 16.8 13 16.6 10.8 17.1 C9.2 17.5 8 18.1 6.9 17.4 L6.2 19.6 L5 19.4 L5.4 21.4 L4.4 22.6 L4.7 25 L3.7 27.9 C1.9 26 0.6 23.2 0.2 20 C-0.2 16.4 0.6 13.4 2.2 11 C4.6 7.6 8 5.2 11.8 3.9 Z"/><path fill="#c85f08" d="M11 11.7 L12.7 12.5 L11.1 12.9 Z"/><path fill="#ef7000" d="M11.4 18 C9.4 18.6 8 20.2 7.5 22.6 C7 25.6 8 28.6 10.2 30.6 C12.4 32.6 15.6 33.4 18.4 33 C20.4 32.7 21.8 32 22.6 30.6 C23.2 29.4 23.1 28.4 22.6 27.6 C21.6 26 19.6 25 17.6 23.8 C15.2 22.4 12.8 20.8 11.4 18 Z"/><path fill="#ef7000" fill-rule="evenodd" d="M34 3.6 C31.8 1.2 29.6 -0.1 26.6 0 C23.4 0.1 20.6 1.2 19.2 3.4 C18.2 5 18 6.8 18.5 9 C19 11.2 20 13.8 21.4 16.2 C22.6 18 23.8 19.8 24.4 22 C25 24.4 25 26.8 24.2 29 C23.6 30.8 22.4 32.6 20.9 34 C23.4 34.2 25.8 33.6 27.9 32.4 C29.6 31.4 30.8 30 31.8 28.4 C32.8 26.8 33.4 25 33.6 23.2 C33.8 21.4 33.6 19.6 33 17.8 C32.4 16 31.4 14 30.4 12 C29.6 10.4 29 8.6 29.2 7.1 C29.5 5.2 31.4 4.2 34 3.6 Z M20.3 6 C21 4.2 22.2 3.1 23.6 2.6 C25 2.1 26.8 1.9 29.1 2.1 C28.3 3.2 28 4.4 27.9 5.6 C27.8 6.8 27.8 8 28 9.6 L26.3 7 L25 8.8 L23.7 6.6 L22.5 7.6 L21.6 5.9 Z"/></svg></div>
<div class="c" style="left:211px;width:181px">1552774102@qq.com</div>
<div class="c" style="left:392px;width:181px">22384GI1030</div>
<div class="c" style="left:573px;width:101px"><span class="sw" style="left:22px"><i></i>禁用</span></div>
<div class="c" style="left:674px;width:101px"><span class="sw" style="left:22px"><i></i>禁用</span></div>
<div class="c" style="left:775px;width:101px"><span class="sw" style="left:22px"><i></i>禁用</span></div>
<div class="c" style="left:876px;width:101px"><span class="sw" style="left:22px"><i></i>禁用</span></div>
<div class="c" style="left:977px;width:81px"><span class="no">否</span></div>
<div class="c" style="left:1058px;width:181px"><span class="ds">------</span></div>
<div class="c" style="left:1239px;width:181px"><span class="ds">------</span></div>
<div class="c" style="left:1420px;width:181px"></div>
<div class="c" style="left:1601px;width:181px">1552774102@qq.com</div>
</div>
<div class="r" style="top:273px">
<div class="c" style="left:0px;width:49px"><i class="cb"></i></div>
<div class="c" style="left:49px;width:81px;text-align:left;padding-left:15px">1025…</div>
<div class="c" style="left:130px;width:81px"><svg class="fox" viewBox="0 0 34 34" width="21.4" height="21.4"><path fill="#ef7000" fill-rule="evenodd" d="M11.8 3.9 L12.4 8.4 L16 12.2 L18.9 14.6 L17.5 16.1 C15.4 16.8 13 16.6 10.8 17.1 C9.2 17.5 8 18.1 6.9 17.4 L6.2 19.6 L5 19.4 L5.4 21.4 L4.4 22.6 L4.7 25 L3.7 27.9 C1.9 26 0.6 23.2 0.2 20 C-0.2 16.4 0.6 13.4 2.2 11 C4.6 7.6 8 5.2 11.8 3.9 Z"/><path fill="#c85f08" d="M11 11.7 L12.7 12.5 L11.1 12.9 Z"/><path fill="#ef7000" d="M11.4 18 C9.4 18.6 8 20.2 7.5 22.6 C7 25.6 8 28.6 10.2 30.6 C12.4 32.6 15.6 33.4 18.4 33 C20.4 32.7 21.8 32 22.6 30.6 C23.2 29.4 23.1 28.4 22.6 27.6 C21.6 26 19.6 25 17.6 23.8 C15.2 22.4 12.8 20.8 11.4 18 Z"/><path fill="#ef7000" fill-rule="evenodd" d="M34 3.6 C31.8 1.2 29.6 -0.1 26.6 0 C23.4 0.1 20.6 1.2 19.2 3.4 C18.2 5 18 6.8 18.5 9 C19 11.2 20 13.8 21.4 16.2 C22.6 18 23.8 19.8 24.4 22 C25 24.4 25 26.8 24.2 29 C23.6 30.8 22.4 32.6 20.9 34 C23.4 34.2 25.8 33.6 27.9 32.4 C29.6 31.4 30.8 30 31.8 28.4 C32.8 26.8 33.4 25 33.6 23.2 C33.8 21.4 33.6 19.6 33 17.8 C32.4 16 31.4 14 30.4 12 C29.6 10.4 29 8.6 29.2 7.1 C29.5 5.2 31.4 4.2 34 3.6 Z M20.3 6 C21 4.2 22.2 3.1 23.6 2.6 C25 2.1 26.8 1.9 29.1 2.1 C28.3 3.2 28 4.4 27.9 5.6 C27.8 6.8 27.8 8 28 9.6 L26.3 7 L25 8.8 L23.7 6.6 L22.5 7.6 L21.6 5.9 Z"/></svg></div>
<div class="c" style="left:211px;width:181px">1817695351@qq.com</div>
<div class="c" style="left:392px;width:181px">22384GP1029</div>
<div class="c" style="left:573px;width:101px"><span class="sw" style="left:22px"><i></i>禁用</span></div>
<div class="c" style="left:674px;width:101px"><span class="sw" style="left:22px"><i></i>禁用</span></div>
<div class="c" style="left:775px;width:101px"><span class="sw" style="left:22px"><i></i>禁用</span></div>
<div class="c" style="left:876px;width:101px"><span class="sw" style="left:22px"><i></i>禁用</span></div>
<div class="c" style="left:977px;width:81px"><span class="no">否</span></div>
<div class="c" style="left:1058px;width:181px"><span class="ds">------</span></div>
<div class="c" style="left:1239px;width:181px"><span class="ds">------</span></div>
<div class="c" style="left:1420px;width:181px"></div>
<div class="c" style="left:1601px;width:181px">1817695351@qq.com</div>
</div>
<div class="r" style="top:312px">
<div class="c" style="left:0px;width:49px"><i class="cb"></i></div>
<div class="c" style="left:49px;width:81px;text-align:left;padding-left:15px">1025…</div>
<div class="c" style="left:130px;width:81px"><svg class="fox" viewBox="0 0 34 34" width="21.4" height="21.4"><path fill="#ef7000" fill-rule="evenodd" d="M11.8 3.9 L12.4 8.4 L16 12.2 L18.9 14.6 L17.5 16.1 C15.4 16.8 13 16.6 10.8 17.1 C9.2 17.5 8 18.1 6.9 17.4 L6.2 19.6 L5 19.4 L5.4 21.4 L4.4 22.6 L4.7 25 L3.7 27.9 C1.9 26 0.6 23.2 0.2 20 C-0.2 16.4 0.6 13.4 2.2 11 C4.6 7.6 8 5.2 11.8 3.9 Z"/><path fill="#c85f08" d="M11 11.7 L12.7 12.5 L11.1 12.9 Z"/><path fill="#ef7000" d="M11.4 18 C9.4 18.6 8 20.2 7.5 22.6 C7 25.6 8 28.6 10.2 30.6 C12.4 32.6 15.6 33.4 18.4 33 C20.4 32.7 21.8 32 22.6 30.6 C23.2 29.4 23.1 28.4 22.6 27.6 C21.6 26 19.6 25 17.6 23.8 C15.2 22.4 12.8 20.8 11.4 18 Z"/><path fill="#ef7000" fill-rule="evenodd" d="M34 3.6 C31.8 1.2 29.6 -0.1 26.6 0 C23.4 0.1 20.6 1.2 19.2 3.4 C18.2 5 18 6.8 18.5 9 C19 11.2 20 13.8 21.4 16.2 C22.6 18 23.8 19.8 24.4 22 C25 24.4 25 26.8 24.2 29 C23.6 30.8 22.4 32.6 20.9 34 C23.4 34.2 25.8 33.6 27.9 32.4 C29.6 31.4 30.8 30 31.8 28.4 C32.8 26.8 33.4 25 33.6 23.2 C33.8 21.4 33.6 19.6 33 17.8 C32.4 16 31.4 14 30.4 12 C29.6 10.4 29 8.6 29.2 7.1 C29.5 5.2 31.4 4.2 34 3.6 Z M20.3 6 C21 4.2 22.2 3.1 23.6 2.6 C25 2.1 26.8 1.9 29.1 2.1 C28.3 3.2 28 4.4 27.9 5.6 C27.8 6.8 27.8 8 28 9.6 L26.3 7 L25 8.8 L23.7 6.6 L22.5 7.6 L21.6 5.9 Z"/></svg></div>
<div class="c" style="left:211px;width:181px">xkjly54188@gmail.com</div>
<div class="c" style="left:392px;width:181px">22384GO1029</div>
<div class="c" style="left:573px;width:101px"><span class="sw" style="left:22px"><i></i>禁用</span></div>
<div class="c" style="left:674px;width:101px"><span class="sw" style="left:22px"><i></i>禁用</span></div>
<div class="c" style="left:775px;width:101px"><span class="sw" style="left:22px"><i></i>禁用</span></div>
<div class="c" style="left:876px;width:101px"><span class="sw" style="left:22px"><i></i>禁用</span></div>
<div class="c" style="left:977px;width:81px"><span class="no">否</span></div>
<div class="c" style="left:1058px;width:181px"><span class="ds">------</span></div>
<div class="c" style="left:1239px;width:181px"><span class="ds">------</span></div>
<div class="c" style="left:1420px;width:181px"></div>
<div class="c" style="left:1601px;width:181px"></div>
</div>
<div class="r" style="top:351px">
<div class="c" style="left:0px;width:49px"><i class="cb"></i></div>
<div class="c" style="left:49px;width:81px;text-align:left;padding-left:15px">1025…</div>
<div class="c" style="left:130px;width:81px"><svg class="fox" viewBox="0 0 34 34" width="21.4" height="21.4"><path fill="#ef7000" fill-rule="evenodd" d="M11.8 3.9 L12.4 8.4 L16 12.2 L18.9 14.6 L17.5 16.1 C15.4 16.8 13 16.6 10.8 17.1 C9.2 17.5 8 18.1 6.9 17.4 L6.2 19.6 L5 19.4 L5.4 21.4 L4.4 22.6 L4.7 25 L3.7 27.9 C1.9 26 0.6 23.2 0.2 20 C-0.2 16.4 0.6 13.4 2.2 11 C4.6 7.6 8 5.2 11.8 3.9 Z"/><path fill="#c85f08" d="M11 11.7 L12.7 12.5 L11.1 12.9 Z"/><path fill="#ef7000" d="M11.4 18 C9.4 18.6 8 20.2 7.5 22.6 C7 25.6 8 28.6 10.2 30.6 C12.4 32.6 15.6 33.4 18.4 33 C20.4 32.7 21.8 32 22.6 30.6 C23.2 29.4 23.1 28.4 22.6 27.6 C21.6 26 19.6 25 17.6 23.8 C15.2 22.4 12.8 20.8 11.4 18 Z"/><path fill="#ef7000" fill-rule="evenodd" d="M34 3.6 C31.8 1.2 29.6 -0.1 26.6 0 C23.4 0.1 20.6 1.2 19.2 3.4 C18.2 5 18 6.8 18.5 9 C19 11.2 20 13.8 21.4 16.2 C22.6 18 23.8 19.8 24.4 22 C25 24.4 25 26.8 24.2 29 C23.6 30.8 22.4 32.6 20.9 34 C23.4 34.2 25.8 33.6 27.9 32.4 C29.6 31.4 30.8 30 31.8 28.4 C32.8 26.8 33.4 25 33.6 23.2 C33.8 21.4 33.6 19.6 33 17.8 C32.4 16 31.4 14 30.4 12 C29.6 10.4 29 8.6 29.2 7.1 C29.5 5.2 31.4 4.2 34 3.6 Z M20.3 6 C21 4.2 22.2 3.1 23.6 2.6 C25 2.1 26.8 1.9 29.1 2.1 C28.3 3.2 28 4.4 27.9 5.6 C27.8 6.8 27.8 8 28 9.6 L26.3 7 L25 8.8 L23.7 6.6 L22.5 7.6 L21.6 5.9 Z"/></svg></div>
<div class="c" style="left:211px;width:181px">kyl958@gmail.com</div>
<div class="c" style="left:392px;width:181px">22384GN1028</div>
<div class="c" style="left:573px;width:101px"><span class="sw" style="left:22px"><i></i>禁用</span></div>
<div class="c" style="left:674px;width:101px"><span class="sw" style="left:22px"><i></i>禁用</span></div>
<div class="c" style="left:775px;width:101px"><span class="sw" style="left:22px"><i></i>禁用</span></div>
<div class="c" style="left:876px;width:101px"><span class="sw" style="left:22px"><i></i>禁用</span></div>
<div class="c" style="left:977px;width:81px"><span class="no">否</span></div>
<div class="c" style="left:1058px;width:181px"><span class="ds">------</span></div>
<div class="c" style="left:1239px;width:181px"><span class="ds">------</span></div>
<div class="c" style="left:1420px;width:181px"></div>
<div class="c" style="left:1601px;width:181px"></div>
</div>
<div class="r" style="top:390px">
<div class="c" style="left:0px;width:49px"><i class="cb"></i></div>
<div class="c" style="left:49px;width:81px;text-align:left;padding-left:15px">1025…</div>
<div class="c" style="left:130px;width:81px"><svg class="fox" viewBox="0 0 34 34" width="21.4" height="21.4"><path fill="#ef7000" fill-rule="evenodd" d="M11.8 3.9 L12.4 8.4 L16 12.2 L18.9 14.6 L17.5 16.1 C15.4 16.8 13 16.6 10.8 17.1 C9.2 17.5 8 18.1 6.9 17.4 L6.2 19.6 L5 19.4 L5.4 21.4 L4.4 22.6 L4.7 25 L3.7 27.9 C1.9 26 0.6 23.2 0.2 20 C-0.2 16.4 0.6 13.4 2.2 11 C4.6 7.6 8 5.2 11.8 3.9 Z"/><path fill="#c85f08" d="M11 11.7 L12.7 12.5 L11.1 12.9 Z"/><path fill="#ef7000" d="M11.4 18 C9.4 18.6 8 20.2 7.5 22.6 C7 25.6 8 28.6 10.2 30.6 C12.4 32.6 15.6 33.4 18.4 33 C20.4 32.7 21.8 32 22.6 30.6 C23.2 29.4 23.1 28.4 22.6 27.6 C21.6 26 19.6 25 17.6 23.8 C15.2 22.4 12.8 20.8 11.4 18 Z"/><path fill="#ef7000" fill-rule="evenodd" d="M34 3.6 C31.8 1.2 29.6 -0.1 26.6 0 C23.4 0.1 20.6 1.2 19.2 3.4 C18.2 5 18 6.8 18.5 9 C19 11.2 20 13.8 21.4 16.2 C22.6 18 23.8 19.8 24.4 22 C25 24.4 25 26.8 24.2 29 C23.6 30.8 22.4 32.6 20.9 34 C23.4 34.2 25.8 33.6 27.9 32.4 C29.6 31.4 30.8 30 31.8 28.4 C32.8 26.8 33.4 25 33.6 23.2 C33.8 21.4 33.6 19.6 33 17.8 C32.4 16 31.4 14 30.4 12 C29.6 10.4 29 8.6 29.2 7.1 C29.5 5.2 31.4 4.2 34 3.6 Z M20.3 6 C21 4.2 22.2 3.1 23.6 2.6 C25 2.1 26.8 1.9 29.1 2.1 C28.3 3.2 28 4.4 27.9 5.6 C27.8 6.8 27.8 8 28 9.6 L26.3 7 L25 8.8 L23.7 6.6 L22.5 7.6 L21.6 5.9 Z"/></svg></div>
<div class="c" style="left:211px;width:181px">390823912@qq.com</div>
<div class="c" style="left:392px;width:181px">22384G11028</div>
<div class="c" style="left:573px;width:101px"><span class="sw" style="left:22px"><i></i>禁用</span></div>
<div class="c" style="left:674px;width:101px"><span class="sw" style="left:22px"><i></i>禁用</span></div>
<div class="c" style="left:775px;width:101px"><span class="sw" style="left:22px"><i></i>禁用</span></div>
<div class="c" style="left:876px;width:101px"><span class="sw" style="left:22px"><i></i>禁用</span></div>
<div class="c" style="left:977px;width:81px"><span class="no">否</span></div>
<div class="c" style="left:1058px;width:181px"><span class="ds">------</span></div>
<div class="c" style="left:1239px;width:181px"><span class="ds">------</span></div>
<div class="c" style="left:1420px;width:181px">16643086096</div>
<div class="c" style="left:1601px;width:181px">390823912@qq.com</div>
</div>
<div class="r" style="top:429px">
<div class="c" style="left:0px;width:49px"><i class="cb"></i></div>
<div class="c" style="left:49px;width:81px;text-align:left;padding-left:15px">1025…</div>
<div class="c" style="left:130px;width:81px"><svg class="fox" viewBox="0 0 34 34" width="21.4" height="21.4"><path fill="#ef7000" fill-rule="evenodd" d="M11.8 3.9 L12.4 8.4 L16 12.2 L18.9 14.6 L17.5 16.1 C15.4 16.8 13 16.6 10.8 17.1 C9.2 17.5 8 18.1 6.9 17.4 L6.2 19.6 L5 19.4 L5.4 21.4 L4.4 22.6 L4.7 25 L3.7 27.9 C1.9 26 0.6 23.2 0.2 20 C-0.2 16.4 0.6 13.4 2.2 11 C4.6 7.6 8 5.2 11.8 3.9 Z"/><path fill="#c85f08" d="M11 11.7 L12.7 12.5 L11.1 12.9 Z"/><path fill="#ef7000" d="M11.4 18 C9.4 18.6 8 20.2 7.5 22.6 C7 25.6 8 28.6 10.2 30.6 C12.4 32.6 15.6 33.4 18.4 33 C20.4 32.7 21.8 32 22.6 30.6 C23.2 29.4 23.1 28.4 22.6 27.6 C21.6 26 19.6 25 17.6 23.8 C15.2 22.4 12.8 20.8 11.4 18 Z"/><path fill="#ef7000" fill-rule="evenodd" d="M34 3.6 C31.8 1.2 29.6 -0.1 26.6 0 C23.4 0.1 20.6 1.2 19.2 3.4 C18.2 5 18 6.8 18.5 9 C19 11.2 20 13.8 21.4 16.2 C22.6 18 23.8 19.8 24.4 22 C25 24.4 25 26.8 24.2 29 C23.6 30.8 22.4 32.6 20.9 34 C23.4 34.2 25.8 33.6 27.9 32.4 C29.6 31.4 30.8 30 31.8 28.4 C32.8 26.8 33.4 25 33.6 23.2 C33.8 21.4 33.6 19.6 33 17.8 C32.4 16 31.4 14 30.4 12 C29.6 10.4 29 8.6 29.2 7.1 C29.5 5.2 31.4 4.2 34 3.6 Z M20.3 6 C21 4.2 22.2 3.1 23.6 2.6 C25 2.1 26.8 1.9 29.1 2.1 C28.3 3.2 28 4.4 27.9 5.6 C27.8 6.8 27.8 8 28 9.6 L26.3 7 L25 8.8 L23.7 6.6 L22.5 7.6 L21.6 5.9 Z"/></svg></div>
<div class="c" style="left:211px;width:181px">2696757098@qq.com</div>
<div class="c" style="left:392px;width:181px">22384GB1028</div>
<div class="c" style="left:573px;width:101px"><span class="sw" style="left:22px"><i></i>禁用</span></div>
<div class="c" style="left:674px;width:101px"><span class="sw" style="left:22px"><i></i>禁用</span></div>
<div class="c" style="left:775px;width:101px"><span class="sw" style="left:22px"><i></i>禁用</span></div>
<div class="c" style="left:876px;width:101px"><span class="sw" style="left:22px"><i></i>禁用</span></div>
<div class="c" style="left:977px;width:81px"><span class="no">否</span></div>
<div class="c" style="left:1058px;width:181px"><span class="ds">------</span></div>
<div class="c" style="left:1239px;width:181px"><span class="ds">------</span></div>
<div class="c" style="left:1420px;width:181px"></div>
<div class="c" style="left:1601px;width:181px">2696757098@qq.com</div>
</div>
<div class="r" style="top:468px">
<div class="c" style="left:0px;width:49px"><i class="cb"></i></div>
<div class="c" style="left:49px;width:81px;text-align:left;padding-left:15px">1025…</div>
<div class="c" style="left:130px;width:81px"><svg class="fox" viewBox="0 0 34 34" width="21.4" height="21.4"><path fill="#ef7000" fill-rule="evenodd" d="M11.8 3.9 L12.4 8.4 L16 12.2 L18.9 14.6 L17.5 16.1 C15.4 16.8 13 16.6 10.8 17.1 C9.2 17.5 8 18.1 6.9 17.4 L6.2 19.6 L5 19.4 L5.4 21.4 L4.4 22.6 L4.7 25 L3.7 27.9 C1.9 26 0.6 23.2 0.2 20 C-0.2 16.4 0.6 13.4 2.2 11 C4.6 7.6 8 5.2 11.8 3.9 Z"/><path fill="#c85f08" d="M11 11.7 L12.7 12.5 L11.1 12.9 Z"/><path fill="#ef7000" d="M11.4 18 C9.4 18.6 8 20.2 7.5 22.6 C7 25.6 8 28.6 10.2 30.6 C12.4 32.6 15.6 33.4 18.4 33 C20.4 32.7 21.8 32 22.6 30.6 C23.2 29.4 23.1 28.4 22.6 27.6 C21.6 26 19.6 25 17.6 23.8 C15.2 22.4 12.8 20.8 11.4 18 Z"/><path fill="#ef7000" fill-rule="evenodd" d="M34 3.6 C31.8 1.2 29.6 -0.1 26.6 0 C23.4 0.1 20.6 1.2 19.2 3.4 C18.2 5 18 6.8 18.5 9 C19 11.2 20 13.8 21.4 16.2 C22.6 18 23.8 19.8 24.4 22 C25 24.4 25 26.8 24.2 29 C23.6 30.8 22.4 32.6 20.9 34 C23.4 34.2 25.8 33.6 27.9 32.4 C29.6 31.4 30.8 30 31.8 28.4 C32.8 26.8 33.4 25 33.6 23.2 C33.8 21.4 33.6 19.6 33 17.8 C32.4 16 31.4 14 30.4 12 C29.6 10.4 29 8.6 29.2 7.1 C29.5 5.2 31.4 4.2 34 3.6 Z M20.3 6 C21 4.2 22.2 3.1 23.6 2.6 C25 2.1 26.8 1.9 29.1 2.1 C28.3 3.2 28 4.4 27.9 5.6 C27.8 6.8 27.8 8 28 9.6 L26.3 7 L25 8.8 L23.7 6.6 L22.5 7.6 L21.6 5.9 Z"/></svg></div>
<div class="c" style="left:211px;width:181px">ywh85947@gmail.com</div>
<div class="c" style="left:392px;width:181px">22384G41028</div>
<div class="c" style="left:573px;width:101px"><span class="sw" style="left:22px"><i></i>禁用</span></div>
<div class="c" style="left:674px;width:101px"><span class="sw" style="left:22px"><i></i>禁用</span></div>
<div class="c" style="left:775px;width:101px"><span class="sw" style="left:22px"><i></i>禁用</span></div>
<div class="c" style="left:876px;width:101px"><span class="sw" style="left:22px"><i></i>禁用</span></div>
<div class="c" style="left:977px;width:81px"><span class="no">否</span></div>
<div class="c" style="left:1058px;width:181px"><span class="ds">------</span></div>
<div class="c" style="left:1239px;width:181px"><span class="ds">------</span></div>
<div class="c" style="left:1420px;width:181px"></div>
<div class="c" style="left:1601px;width:181px"></div>
</div>
<div class="r" style="top:507px">
<div class="c" style="left:0px;width:49px"><i class="cb"></i></div>
<div class="c" style="left:49px;width:81px;text-align:left;padding-left:15px">1025…</div>
<div class="c" style="left:130px;width:81px"><svg class="fox" viewBox="0 0 34 34" width="21.4" height="21.4"><path fill="#ef7000" fill-rule="evenodd" d="M11.8 3.9 L12.4 8.4 L16 12.2 L18.9 14.6 L17.5 16.1 C15.4 16.8 13 16.6 10.8 17.1 C9.2 17.5 8 18.1 6.9 17.4 L6.2 19.6 L5 19.4 L5.4 21.4 L4.4 22.6 L4.7 25 L3.7 27.9 C1.9 26 0.6 23.2 0.2 20 C-0.2 16.4 0.6 13.4 2.2 11 C4.6 7.6 8 5.2 11.8 3.9 Z"/><path fill="#c85f08" d="M11 11.7 L12.7 12.5 L11.1 12.9 Z"/><path fill="#ef7000" d="M11.4 18 C9.4 18.6 8 20.2 7.5 22.6 C7 25.6 8 28.6 10.2 30.6 C12.4 32.6 15.6 33.4 18.4 33 C20.4 32.7 21.8 32 22.6 30.6 C23.2 29.4 23.1 28.4 22.6 27.6 C21.6 26 19.6 25 17.6 23.8 C15.2 22.4 12.8 20.8 11.4 18 Z"/><path fill="#ef7000" fill-rule="evenodd" d="M34 3.6 C31.8 1.2 29.6 -0.1 26.6 0 C23.4 0.1 20.6 1.2 19.2 3.4 C18.2 5 18 6.8 18.5 9 C19 11.2 20 13.8 21.4 16.2 C22.6 18 23.8 19.8 24.4 22 C25 24.4 25 26.8 24.2 29 C23.6 30.8 22.4 32.6 20.9 34 C23.4 34.2 25.8 33.6 27.9 32.4 C29.6 31.4 30.8 30 31.8 28.4 C32.8 26.8 33.4 25 33.6 23.2 C33.8 21.4 33.6 19.6 33 17.8 C32.4 16 31.4 14 30.4 12 C29.6 10.4 29 8.6 29.2 7.1 C29.5 5.2 31.4 4.2 34 3.6 Z M20.3 6 C21 4.2 22.2 3.1 23.6 2.6 C25 2.1 26.8 1.9 29.1 2.1 C28.3 3.2 28 4.4 27.9 5.6 C27.8 6.8 27.8 8 28 9.6 L26.3 7 L25 8.8 L23.7 6.6 L22.5 7.6 L21.6 5.9 Z"/></svg></div>
<div class="c" style="left:211px;width:181px">1415964641@qq.com</div>
<div class="c" style="left:392px;width:181px">22384GA1027</div>
<div class="c" style="left:573px;width:101px"><span class="sw" style="left:22px"><i></i>禁用</span></div>
<div class="c" style="left:674px;width:101px"><span class="sw" style="left:22px"><i></i>禁用</span></div>
<div class="c" style="left:775px;width:101px"><span class="sw" style="left:22px"><i></i>禁用</span></div>
<div class="c" style="left:876px;width:101px"><span class="sw" style="left:22px"><i></i>禁用</span></div>
<div class="c" style="left:977px;width:81px"><span class="no">否</span></div>
<div class="c" style="left:1058px;width:181px"><span class="ds">------</span></div>
<div class="c" style="left:1239px;width:181px"><span class="ds">------</span></div>
<div class="c" style="left:1420px;width:181px"></div>
<div class="c" style="left:1601px;width:181px">1415964641@qq.com</div>
</div>
<div class="r" style="top:546px">
<div class="c" style="left:0px;width:49px"><i class="cb"></i></div>
<div class="c" style="left:49px;width:81px;text-align:left;padding-left:15px">1025…</div>
<div class="c" style="left:130px;width:81px"><svg class="fox" viewBox="0 0 34 34" width="21.4" height="21.4"><path fill="#ef7000" fill-rule="evenodd" d="M11.8 3.9 L12.4 8.4 L16 12.2 L18.9 14.6 L17.5 16.1 C15.4 16.8 13 16.6 10.8 17.1 C9.2 17.5 8 18.1 6.9 17.4 L6.2 19.6 L5 19.4 L5.4 21.4 L4.4 22.6 L4.7 25 L3.7 27.9 C1.9 26 0.6 23.2 0.2 20 C-0.2 16.4 0.6 13.4 2.2 11 C4.6 7.6 8 5.2 11.8 3.9 Z"/><path fill="#c85f08" d="M11 11.7 L12.7 12.5 L11.1 12.9 Z"/><path fill="#ef7000" d="M11.4 18 C9.4 18.6 8 20.2 7.5 22.6 C7 25.6 8 28.6 10.2 30.6 C12.4 32.6 15.6 33.4 18.4 33 C20.4 32.7 21.8 32 22.6 30.6 C23.2 29.4 23.1 28.4 22.6 27.6 C21.6 26 19.6 25 17.6 23.8 C15.2 22.4 12.8 20.8 11.4 18 Z"/><path fill="#ef7000" fill-rule="evenodd" d="M34 3.6 C31.8 1.2 29.6 -0.1 26.6 0 C23.4 0.1 20.6 1.2 19.2 3.4 C18.2 5 18 6.8 18.5 9 C19 11.2 20 13.8 21.4 16.2 C22.6 18 23.8 19.8 24.4 22 C25 24.4 25 26.8 24.2 29 C23.6 30.8 22.4 32.6 20.9 34 C23.4 34.2 25.8 33.6 27.9 32.4 C29.6 31.4 30.8 30 31.8 28.4 C32.8 26.8 33.4 25 33.6 23.2 C33.8 21.4 33.6 19.6 33 17.8 C32.4 16 31.4 14 30.4 12 C29.6 10.4 29 8.6 29.2 7.1 C29.5 5.2 31.4 4.2 34 3.6 Z M20.3 6 C21 4.2 22.2 3.1 23.6 2.6 C25 2.1 26.8 1.9 29.1 2.1 C28.3 3.2 28 4.4 27.9 5.6 C27.8 6.8 27.8 8 28 9.6 L26.3 7 L25 8.8 L23.7 6.6 L22.5 7.6 L21.6 5.9 Z"/></svg></div>
<div class="c" style="left:211px;width:181px">603391403@qq.com</div>
<div class="c" style="left:392px;width:181px">22384GQ1027</div>
<div class="c" style="left:573px;width:101px"><span class="sw" style="left:22px"><i></i>禁用</span></div>
<div class="c" style="left:674px;width:101px"><span class="sw" style="left:22px"><i></i>禁用</span></div>
<div class="c" style="left:775px;width:101px"><span class="sw" style="left:22px"><i></i>禁用</span></div>
<div class="c" style="left:876px;width:101px"><span class="sw" style="left:22px"><i></i>禁用</span></div>
<div class="c" style="left:977px;width:81px"><span class="no">否</span></div>
<div class="c" style="left:1058px;width:181px"><span class="ds">------</span></div>
<div class="c" style="left:1239px;width:181px"><span class="ds">------</span></div>
<div class="c" style="left:1420px;width:181px">18778741188</div>
<div class="c" style="left:1601px;width:181px">603391403@qq.com</div>
</div>
<div class="r" style="top:585px">
<div class="c" style="left:0px;width:49px"><i class="cb"></i></div>
<div class="c" style="left:49px;width:81px;text-align:left;padding-left:15px">1025…</div>
<div class="c" style="left:130px;width:81px"><svg class="fox" viewBox="0 0 34 34" width="21.4" height="21.4"><path fill="#ef7000" fill-rule="evenodd" d="M11.8 3.9 L12.4 8.4 L16 12.2 L18.9 14.6 L17.5 16.1 C15.4 16.8 13 16.6 10.8 17.1 C9.2 17.5 8 18.1 6.9 17.4 L6.2 19.6 L5 19.4 L5.4 21.4 L4.4 22.6 L4.7 25 L3.7 27.9 C1.9 26 0.6 23.2 0.2 20 C-0.2 16.4 0.6 13.4 2.2 11 C4.6 7.6 8 5.2 11.8 3.9 Z"/><path fill="#c85f08" d="M11 11.7 L12.7 12.5 L11.1 12.9 Z"/><path fill="#ef7000" d="M11.4 18 C9.4 18.6 8 20.2 7.5 22.6 C7 25.6 8 28.6 10.2 30.6 C12.4 32.6 15.6 33.4 18.4 33 C20.4 32.7 21.8 32 22.6 30.6 C23.2 29.4 23.1 28.4 22.6 27.6 C21.6 26 19.6 25 17.6 23.8 C15.2 22.4 12.8 20.8 11.4 18 Z"/><path fill="#ef7000" fill-rule="evenodd" d="M34 3.6 C31.8 1.2 29.6 -0.1 26.6 0 C23.4 0.1 20.6 1.2 19.2 3.4 C18.2 5 18 6.8 18.5 9 C19 11.2 20 13.8 21.4 16.2 C22.6 18 23.8 19.8 24.4 22 C25 24.4 25 26.8 24.2 29 C23.6 30.8 22.4 32.6 20.9 34 C23.4 34.2 25.8 33.6 27.9 32.4 C29.6 31.4 30.8 30 31.8 28.4 C32.8 26.8 33.4 25 33.6 23.2 C33.8 21.4 33.6 19.6 33 17.8 C32.4 16 31.4 14 30.4 12 C29.6 10.4 29 8.6 29.2 7.1 C29.5 5.2 31.4 4.2 34 3.6 Z M20.3 6 C21 4.2 22.2 3.1 23.6 2.6 C25 2.1 26.8 1.9 29.1 2.1 C28.3 3.2 28 4.4 27.9 5.6 C27.8 6.8 27.8 8 28 9.6 L26.3 7 L25 8.8 L23.7 6.6 L22.5 7.6 L21.6 5.9 Z"/></svg></div>
<div class="c" style="left:211px;width:181px">xy1314@gmail.com</div>
<div class="c" style="left:392px;width:181px">22384GH1027</div>
<div class="c" style="left:573px;width:101px"><span class="sw" style="left:22px"><i></i>禁用</span></div>
<div class="c" style="left:674px;width:101px"><span class="sw" style="left:22px"><i></i>禁用</span></div>
<div class="c" style="left:775px;width:101px"><span class="sw" style="left:22px"><i></i>禁用</span></div>
<div class="c" style="left:876px;width:101px"><span class="sw" style="left:22px"><i></i>禁用</span></div>
<div class="c" style="left:977px;width:81px"><span class="no">否</span></div>
<div class="c" style="left:1058px;width:181px"><span class="ds">------</span></div>
<div class="c" style="left:1239px;width:181px"><span class="ds">------</span></div>
<div class="c" style="left:1420px;width:181px"></div>
<div class="c" style="left:1601px;width:181px"></div>
</div>
</div>
<div id="sb"><div class="th"></div><svg class="abs" style="left:6px;top:4.5px" width="5" height="8" viewBox="0 0 5 8"><path d="M4.6 0.5 V7.5 L0.2 4 Z" fill="#a3a3a3"/></svg><svg class="abs" style="left:1646px;top:4px" width="5" height="8" viewBox="0 0 5 8"><path d="M0 0 V8 L5 4 Z" fill="#505050"/></svg></div>
<svg class="abs" style="left:247px;top:850px" width="8" height="13" viewBox="0 0 8 13"><path d="M7 0.8 L1.4 6.5 L7 12.2" fill="none" stroke="#d2d2d2" stroke-width="1.3"/></svg>
<div class="pg" style="left:270px;top:843px;width:31px;height:26px;line-height:26px;border-radius:50%;background:#1e9fff;color:#fff">1</div>
<div class="pg" style="left:300px;width:30px">2</div>
<div class="pg" style="left:330px;width:30px">3</div>
<div class="pg" style="left:356px;width:18px;color:#666">…</div>
<div class="pg" style="left:374px;width:30px">95</div>
<svg class="abs" style="left:422px;top:850px" width="8" height="13" viewBox="0 0 8 13"><path d="M1 0.8 L6.6 6.5 L1 12.2" fill="none" stroke="#333" stroke-width="1.3"/></svg>
<div class="pg" style="left:445px;color:#999">到第</div>
<div class="pg" style="left:479px;width:40px;border:1px solid #e2e2e2;border-radius:2px;line-height:24px">1</div>
<div class="pg" style="left:529px;color:#999">页</div>
<div class="pg" style="left:551px;width:46px;border:1px solid #e2e2e2;border-radius:2px;line-height:25.6px">确定</div>
<div class="pg" style="left:607px;color:#444">共 1416 条</div>
<div class="pg" style="left:675px;width:81px;border:1px solid #e2e2e2;border-radius:2px;line-height:24px;text-align:left;padding-left:7px;color:#000">15 条/页<svg class="abs" style="left:64px;top:9px" width="10" height="7" viewBox="0 0 10 7"><path d="M1 1 L5 5 L9 1" fill="none" stroke="#000" stroke-width="1.8"/></svg></div>
<div id="wm">海外源码</div>
</body></html>
